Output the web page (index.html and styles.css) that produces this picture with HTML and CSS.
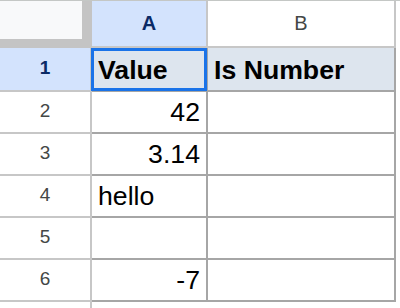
FILE: index.html
```html
<!DOCTYPE html>
<html>
<head>
<meta charset="utf-8">
<link rel="stylesheet" href="styles.css">
</head>
<body>
<div class="sheet">
  <div class="corner"><div class="corner-fill"></div></div>
  <div class="colhead selected">A</div>
  <div class="colhead">B</div>

  <div class="rowhead selected">1</div>
  <div class="cell hdr active">Value</div>
  <div class="cell hdr">Is Number</div>

  <div class="rowhead">2</div>
  <div class="cell num">42</div>
  <div class="cell"></div>

  <div class="rowhead">3</div>
  <div class="cell num">3.14</div>
  <div class="cell"></div>

  <div class="rowhead">4</div>
  <div class="cell">hello</div>
  <div class="cell"></div>

  <div class="rowhead">5</div>
  <div class="cell"></div>
  <div class="cell"></div>

  <div class="rowhead">6</div>
  <div class="cell num">-7</div>
  <div class="cell"></div>

  <div class="rowhead last"></div>
  <div class="blank"></div>
  <div class="blank"></div>
</div>
</body>
</html>
```
FILE: styles.css
```css
html, body {
  margin: 0;
  padding: 0;
  background: #ffffff;
}
body {
  width: 400px;
  height: 308px;
  overflow: hidden;
  border-top: 1px solid #c4c7c5;
  box-sizing: border-box;
  font-family: "Liberation Sans", Arial, sans-serif;
}
.sheet {
  display: grid;
  grid-template-columns: 92px 116px 188px;
  grid-template-rows: 47px 44px repeat(5, 42px) 6px;
}
.corner {
  background: #c4c4c4;
}
.corner-fill {
  width: 82px;
  height: 38px;
  background: #f8f9fa;
}
.colhead {
  box-sizing: border-box;
  border-right: 2px solid #c7c7c7;
  border-bottom: 2px solid #c7c7c7;
  display: flex;
  align-items: center;
  justify-content: center;
  font-size: 20px;
  color: #444746;
  background: #ffffff;
}
.colhead.selected {
  background: #d3e3fd;
  color: #0a2a66;
  font-weight: bold;
}
.rowhead {
  box-sizing: border-box;
  border-right: 2px solid #c7c7c7;
  border-bottom: 2px solid #c7c7c7;
  display: flex;
  align-items: center;
  justify-content: center;
  font-size: 19px;
  color: #444746;
  padding-bottom: 2px;
}
.rowhead.selected {
  background: #d3e3fd;
  color: #0a2a66;
  font-weight: bold;
}
.rowhead.last {
  border-bottom: none;
}
.cell {
  box-sizing: border-box;
  border-right: 2px solid #a6a6a6;
  border-bottom: 2px solid #a6a6a6;
  display: flex;
  align-items: flex-end;
  padding: 0 6px 6px 6px;
  font-size: 26.67px;
  line-height: 1;
  color: #000000;
  white-space: nowrap;
}
.cell.num {
  justify-content: flex-end;
}
.cell.hdr {
  background: #dde5ee;
  font-weight: bold;
}
.cell.active {
  position: relative;
}
.cell.active::after {
  content: "";
  position: absolute;
  top: 0;
  left: -1px;
  right: -1px;
  bottom: -1px;
  border: 3px solid #1a73e8;
}
.blank {
  background: #ffffff;
}
```
